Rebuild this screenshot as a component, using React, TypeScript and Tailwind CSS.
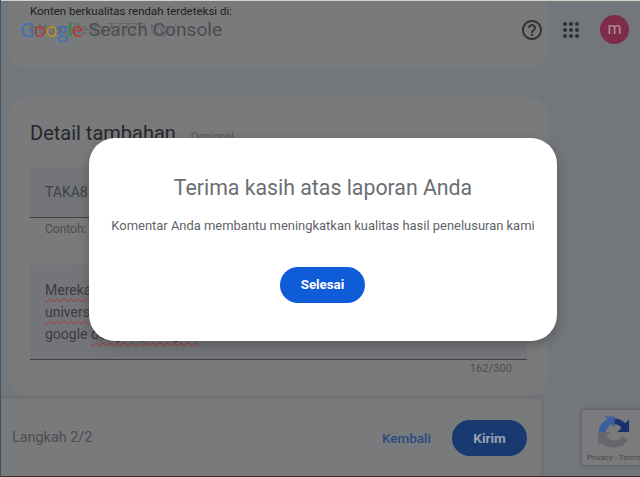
const roboto = "font-['Roboto',sans-serif]";

function Squiggle({ children }: { children: string }) {
  return (
    <span className="underline decoration-wavy decoration-[#a8343a] decoration-1 underline-offset-[3px]">
      {children}
    </span>
  );
}

function ReportForm() {
  return (
    <div className="flex w-[640px] flex-col">
      <div className="-mt-5 ml-2 h-[89px] w-[540px] rounded-b-[20px] bg-[#797a7b] pl-[22px] pt-[23px]">
        <p className="text-[11.5px] leading-4 text-[#1f2022]">Konten berkualitas rendah terdeteksi di:</p>
        <p className="mt-px text-[14.4px] leading-5 text-[#636568]">https://lefto77777.top/</p>
      </div>

      <div className="ml-2 mt-7 h-[298px] w-[540px] rounded-[20px] bg-[#797a7b] pl-[22px] pr-[21px] pt-[22px]">
        <div className="flex items-baseline gap-[15px]">
          <h2 className="text-[20px] leading-7 text-[#26272a]">Detail tambahan</h2>
          <span className="text-[11px] text-[#55575a]">Opsional</span>
        </div>
        <div className="mt-5 flex h-[51px] items-center border-b border-[#3f4043] bg-[#747578] pl-[15px] text-[14px] text-[#3f4144]">
          TAKA8
        </div>
        <p className="mt-[3px] pl-[15px] text-[12px] leading-4 text-[#4b4d50]">Contoh: https://contoh.com</p>
        <div className="mt-7 h-[95px] border-b border-[#3f4043] bg-[#747578] px-[15px] pt-[14px] text-[14px] leading-[22px] text-[#3a3c3f]">
          <Squiggle>Mereka</Squiggle> menipu pengguna
          <br />
          <Squiggle>universitas</Squiggle> yang mencari
          <br />
          google <Squiggle>dengan</Squiggle> <Squiggle>peringkat</Squiggle>
        </div>
        <p className="mt-px pr-[15px] text-right text-[11px] leading-4 tracking-[0.1px] text-[#4b4d50]">162/300</p>
      </div>

      <div className="flex h-[82px] w-[544px] items-center justify-between border-r-[3px] border-t-4 border-[#707173] bg-[#797a7c] pl-3 pr-[14px]">
        <span className="text-[14.4px] text-[#4b4d50]">Langkah 2/2</span>
        <div className="flex items-center gap-[21px]">
          <span className="text-[13.5px] font-medium text-[#2a4a82]">Kembali</span>
          <button className="h-9 w-[75px] rounded-full bg-[#183a70] text-[13.5px] font-bold text-[#9aa3b4]">Kirim</button>
        </div>
      </div>
    </div>
  );
}

function HeaderOverlay() {
  return (
    <div className="absolute left-0 top-0 flex h-[59px] w-full items-center justify-between pl-5 pr-[11px]">
      <div className="flex items-center gap-[6px] text-[19.2px] leading-none">
        <span className="font-['Open_Sans',sans-serif] text-[20px] tracking-[-0.5px]">
          <span className="text-[#3f6fb8]">G</span>
          <span className="text-[#b03a30]">o</span>
          <span className="text-[#b8941f]">o</span>
          <span className="text-[#3f6fb8]">g</span>
          <span className="text-[#2f8a4a]">l</span>
          <span className="text-[#b03a30]">e</span>
        </span>
        <span className="text-[#4b4d50]">Search Console</span>
      </div>
      <div className="flex items-center">
        <svg width="24" height="24" viewBox="0 0 24 24" fill="#303134">
          <path d="M11 18h2v-2h-2v2zm1-16C6.48 2 2 6.48 2 12s4.48 10 10 10 10-4.48 10-10S17.52 2 12 2zm0 18c-4.41 0-8-3.59-8-8s3.59-8 8-8 8 3.59 8 8-3.59 8-8 8zm0-14c-2.21 0-4 1.79-4 4h2c0-1.1.9-2 2-2s2 .9 2 2c0 2-3 1.75-3 5h2c0-2.25 3-2.5 3-5 0-2.21-1.79-4-4-4z" />
        </svg>
        <svg className="ml-[15px]" width="24" height="24" viewBox="0 0 24 24" fill="#303134">
          <path d="M6 8c1.1 0 2-.9 2-2s-.9-2-2-2-2 .9-2 2 .9 2 2 2zm6 12c1.1 0 2-.9 2-2s-.9-2-2-2-2 .9-2 2 .9 2 2 2zm-6 0c1.1 0 2-.9 2-2s-.9-2-2-2-2 .9-2 2 .9 2 2 2zm0-6c1.1 0 2-.9 2-2s-.9-2-2-2-2 .9-2 2 .9 2 2 2zm6 0c1.1 0 2-.9 2-2s-.9-2-2-2-2 .9-2 2 .9 2 2 2zm4-8c0 1.1.9 2 2 2s2-.9 2-2-.9-2-2-2-2 .9-2 2zm-4 2c1.1 0 2-.9 2-2s-.9-2-2-2-2 .9-2 2 .9 2 2 2zm6 6c1.1 0 2-.9 2-2s-.9-2-2-2-2 .9-2 2 .9 2 2 2zm0 6c1.1 0 2-.9 2-2s-.9-2-2-2-2 .9-2 2 .9 2 2 2z" />
        </svg>
        <div className="ml-[17px] flex h-[29px] w-[29px] items-center justify-center rounded-full bg-[#7d2d4a] pb-0.5 text-[16px] text-[#b5909e]">
          m
        </div>
      </div>
    </div>
  );
}

function RecaptchaBadge() {
  return (
    <div className="absolute left-[582px] top-[410px] h-[55px] w-[70px] rounded-[3px] bg-[#7b7b7d] shadow-[0_0_4px_rgba(0,0,0,0.3)]">
      <svg className="ml-[15px] mt-[6px]" width="35" height="34" viewBox="0 0 36 34">
        <path d="M2 16C2 10 6 5 11 3L8 0H18V12L15 8C12 9 10 12 9 16Z" fill="#3a5f9c" />
        <path d="M18 2C22 2 26 4 29 7L33 3V16H21L25 12C23 9 21 8 18 8Z" fill="#1c2f6e" />
        <path d="M1 16H14L10 20C12 24 18 26 22 24C24 23 25 22 26 20L32 24C28 30 22 32 17 32C12 32 8 30 5 27L1 30Z" fill="#66676a" />
      </svg>
      <p className="mt-[2px] whitespace-nowrap pl-[5px] text-[8px] leading-3 text-[#46484b]">Privacy · Terms</p>
    </div>
  );
}

function ThanksDialog() {
  return (
    <div className="absolute left-[89px] top-[138px] flex h-[203px] w-[468px] flex-col items-center rounded-[26px] bg-white pt-9 shadow-[0_4px_12px_rgba(0,0,0,0.25)]">
      <h1 className="text-[21.3px] leading-7 text-[#6a6e73]">Terima kasih atas laporan Anda</h1>
      <p className="mt-[14px] text-[12.95px] leading-5 text-[#5f6368]">
        Komentar Anda membantu meningkatkan kualitas hasil penelusuran kami
      </p>
      <button className="mr-px mt-[31px] h-9 w-[85px] rounded-full bg-[#0f5cd8] text-[13.3px] font-bold text-white">Selesai</button>
    </div>
  );
}

export default function App() {
  return (
    <div className={`relative h-[477px] w-[640px] overflow-hidden bg-[#73767b] ${roboto}`}>
      <ReportForm />
      <HeaderOverlay />
      <ThanksDialog />
      <RecaptchaBadge />
      <div className="absolute left-0 top-0 h-px w-full bg-[#d2d4c8]" />
      <div className="absolute bottom-0 left-0 h-px w-full bg-[#3a2a28]" />
      <div className="absolute left-0 top-0 h-full w-px bg-[#3d5468]" />
    </div>
  );
}
